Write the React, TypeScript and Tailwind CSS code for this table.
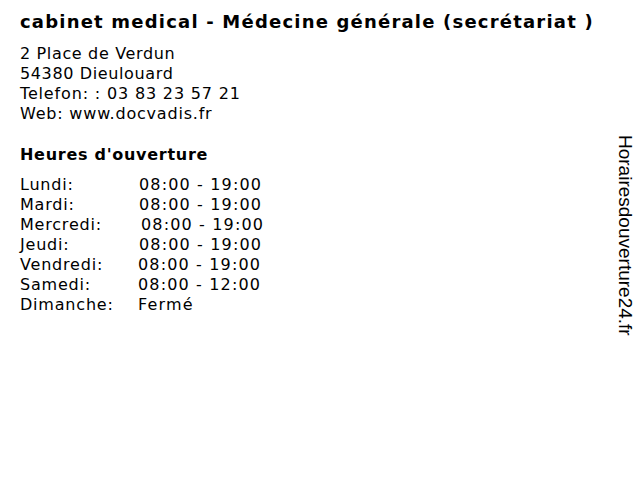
import React from "react";

const rows: [string, string, string][] = [
  ["Lundi:", "08:00 - 19:00", "pl-[119px]"],
  ["Mardi:", "08:00 - 19:00", "pl-[119px]"],
  ["Mercredi:", "08:00 - 19:00", "pl-[121px]"],
  ["Jeudi:", "08:00 - 19:00", "pl-[119px]"],
  ["Vendredi:", "08:00 - 19:00", "pl-[118px]"],
  ["Samedi:", "08:00 - 12:00", "pl-[118px]"],
  ["Dimanche:", "Fermé", "pl-[118px]"],
];

export default function App() {
  return (
    <div className="relative w-[640px] h-[480px] bg-white text-black font-['DejaVu_Sans',sans-serif]">
      <div className="pl-[20px] pt-[10px]">
        <h1 className="text-[18px] leading-[24px] font-bold tracking-[1.2px] whitespace-nowrap">cabinet medical - Médecine générale (secrétariat )</h1>
        <div className="mt-[10px] text-[16px] leading-[20px]">
          <div className="tracking-[0.65px]">2 Place de Verdun</div>
          <div className="tracking-[0.63px]">54380 Dieulouard</div>
          <div className="tracking-[0.84px]">Telefon: : 03 83 23 57 21</div>
          <div className="tracking-[0.8px]">Web: www.docvadis.fr</div>
        </div>
        <h2 className="mt-[21px] text-[16px] leading-[20px] font-bold tracking-[0.72px]">Heures d'ouverture</h2>
        <div className="mt-[10px] text-[16px] leading-[20px]">
          {rows.map(([d, t, p]) => (
            <div key={d} className="relative">
              <span className="absolute left-0 top-0 tracking-[0.8px]">{d}</span>
              <span className={`block tracking-[1.15px] ${p}`}>{t}</span>
            </div>
          ))}
        </div>
      </div>
      <div className="absolute left-[636px] top-[135px] origin-top-left rotate-90 whitespace-nowrap text-[19px] leading-[22px] font-['Liberation_Sans',sans-serif]">
        Horairesdouverture24.fr
      </div>
    </div>
  );
}
